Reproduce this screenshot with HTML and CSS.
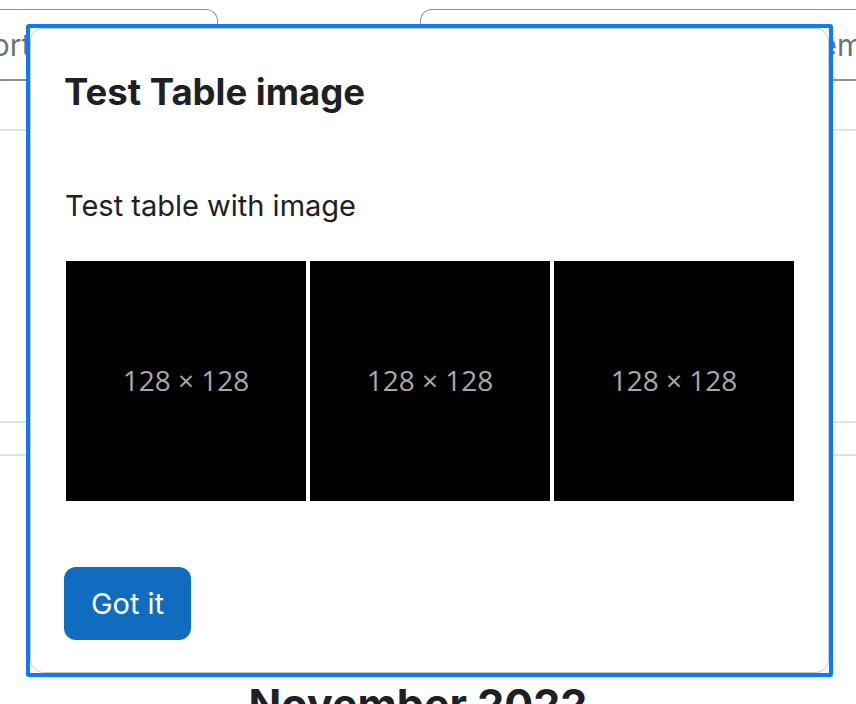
FILE: index.html
```html
<!DOCTYPE html>
<html lang="en">
<head>
<meta charset="utf-8">
<title>Test Table image</title>
<link rel="stylesheet" href="styles.css">
</head>
<body>
<div class="page">
  <div class="tabs">
    <div class="tab tab-left">Report</div>
    <div class="tab tab-right">System</div>
  </div>
  <div class="rule rule-a"></div>
  <div class="rule rule-b"></div>
  <div class="rule rule-c"></div>
  <h2 class="month">November 2022</h2>
</div>

<div class="tour-focus">
  <div class="tour-step">
    <h5 class="tour-title">Test Table image</h5>
    <p class="tour-text">Test table with image</p>
    <div class="tour-table">
      <div class="ph">128&nbsp;×&nbsp;128</div>
      <div class="ph">128&nbsp;×&nbsp;128</div>
      <div class="ph">128&nbsp;×&nbsp;128</div>
    </div>
    <button class="btn-primary">Got it</button>
  </div>
</div>
</body>
</html>
```
FILE: styles.css
```css
* { box-sizing: border-box; }
html, body {
  margin: 0;
  padding: 0;
  width: 856px;
  height: 704px;
  overflow: hidden;
  background: #fff;
  font-family: "Inter", "Liberation Sans", sans-serif;
  color: #1d2125;
}
.page {
  position: relative;
  padding-top: 9px;
}
.tabs {
  display: flex;
  height: 72px;
  border-bottom: 2px solid #8a9097;
}
.tab {
  border: 1.5px solid #8a9097;
  border-bottom: 0;
  border-radius: 12px 12px 0 0;
  color: #6a737b;
  font-size: 30px;
  line-height: 36px;
  padding-top: 17px;
  white-space: nowrap;
  overflow: hidden;
}
.tab-left {
  margin-left: -200px;
  width: 418px;
  flex: none;
  padding-left: 136px;
}
.tab-right {
  margin-left: 202px;
  flex: none;
  width: 600px;
  padding-left: 337px;
}
.rule {
  height: 2px;
  background: #dee2e6;
}
.rule-a { margin-top: 48px; }
.rule-b { margin-top: 290px; }
.rule-c { margin-top: 31px; }
.month {
  margin: 222px 0 0;
  padding-right: 20px;
  text-align: center;
  font-size: 43px;
  line-height: 52px;
  font-weight: 700;
  color: #1d2125;
}

.tour-focus {
  position: absolute;
  left: 26px;
  top: 24px;
  width: 807px;
  height: 653px;
  border: 4px solid #0a7bff;
  border-radius: 3px;
  background: transparent;
}
.tour-step {
  width: 100%;
  height: 100%;
  background: #fff;
  border: 1.5px solid #c8c8c8;
  border-radius: 13px;
  padding: 41px 34px 0 35px;
}
.tour-title {
  margin: 0 0 0 -2px;
  font-size: 36.5px;
  line-height: 44px;
  font-weight: 700;
  color: #1d2125;
}
.tour-text {
  margin: 74px 0 0 -1px;
  font-size: 29px;
  line-height: 36px;
  color: #1d2125;
}
.tour-table {
  display: flex;
  gap: 4px;
  margin-top: 37px;
}
.ph {
  width: 240px;
  height: 240px;
  background: #000;
  color: #a8a8a8;
  font-family: "Open Sans", "DejaVu Sans", sans-serif;
  font-size: 28px;
  font-weight: 400;
  padding-bottom: 2px;
  display: flex;
  align-items: center;
  justify-content: center;
}
.btn-primary {
  display: block;
  margin: 66px 0 0 -2px;
  width: 127px;
  height: 73px;
  border: 0;
  border-radius: 12px;
  background: #0f6cbf;
  color: #fff;
  font-family: "Inter", "Liberation Sans", sans-serif;
  font-size: 29px;
  padding: 0;
}
```
